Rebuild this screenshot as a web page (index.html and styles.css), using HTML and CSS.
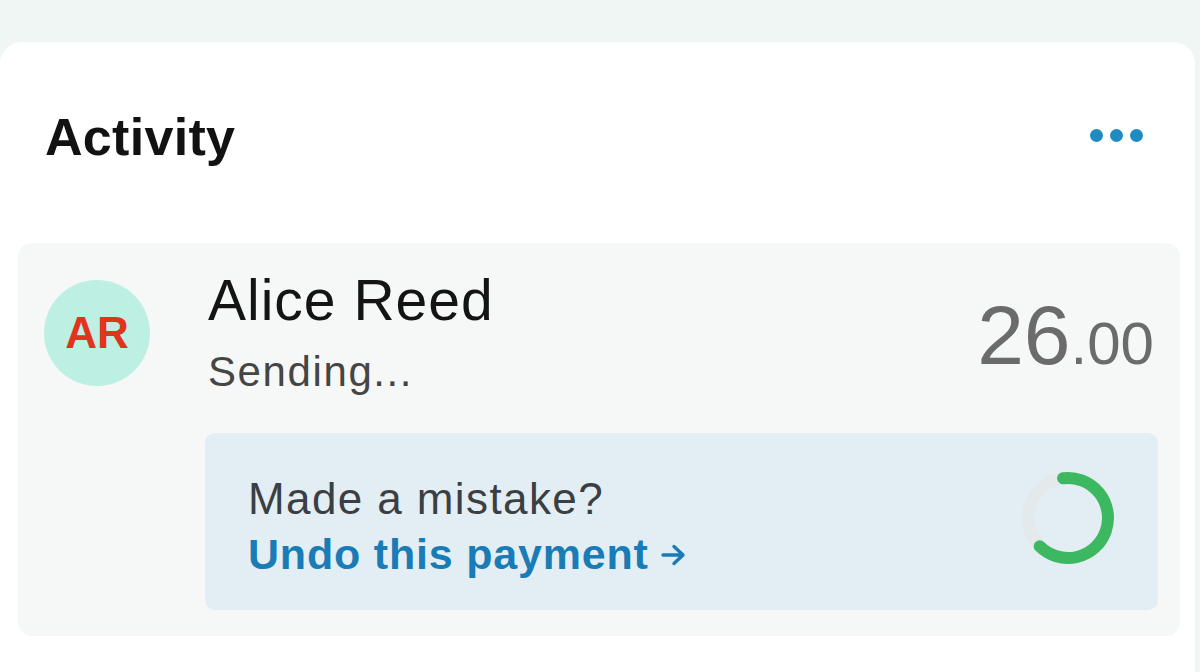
FILE: index.html
```html
<!DOCTYPE html>
<html lang="en">
<head>
  <meta charset="UTF-8" />
  <meta name="viewport" content="width=device-width, initial-scale=1.0"/>
  <title>Activity</title>
  <link rel="stylesheet" href="styles.css">
</head>
<body>
  <div class="card">
    <!-- header -->
    <div class="card-head">
      <h1>Activity</h1>
      <button class="more" aria-label="More">
        <span></span><span></span><span></span>
      </button>
    </div>

    <!-- pending payment -->
    <div class="item">
      <div class="item-row">
        <div class="avatar">AR</div>
        <div class="who">
          <div class="name">Alice Reed</div>
          <div class="status">Sending...</div>
        </div>
        <div class="amount">26<span class="cents">.00</span></div>
      </div>

      <div class="undo">
        <div class="undo-text">
          <div class="undo-q">Made a mistake?</div>
          <a class="undo-link" href="#">Undo this payment
            <svg class="arrow" width="26" height="24" viewBox="0 0 26 24">
              <path d="M2 12 H22 M13 3.5 L22 12 L13 20.5" fill="none" stroke="#1a7cb6" stroke-width="3.4" stroke-linecap="round" stroke-linejoin="round"/>
            </svg>
          </a>
        </div>
        <svg class="spinner" width="100" height="100" viewBox="0 0 100 100">
          <circle cx="50" cy="50" r="40" fill="none" stroke="#e4e9ec" stroke-width="12"/>
          <path d="M45.1 10.3 A40 40 0 1 1 21.7 78.3" fill="none" stroke="#3cb860" stroke-width="12" stroke-linecap="round"/>
        </svg>
      </div>
    </div>
  </div>
</body>
</html>
```

FILE: styles.css
```css
body {
  font-family: 'Liberation Sans', Arial, sans-serif;
  margin: 0;
  background-color: #eff6f3;
  color: #111;
  height: 672px;
  overflow: hidden;
}
.card {
  margin-top: 42px;
  margin-right: 5px;
  background-color: #fff;
  border-radius: 22px 22px 0 0;
  height: 630px;
  padding: 0 15px 0 18px;
}
.card-head {
  display: flex;
  justify-content: space-between;
  align-items: center;
  padding: 65px 37px 0 27px;
  margin-bottom: 76px;
}
h1 {
  margin: 0;
  font-size: 52px;
  line-height: 60px;
  font-weight: 700;
  letter-spacing: 0.3px;
  color: #121212;
}
.more {
  display: flex;
  gap: 7px;
  padding: 0;
  border: none;
  background: none;
  margin-top: -4px;
}
.more span {
  width: 13px;
  height: 13px;
  border-radius: 50%;
  background-color: #1e8bc3;
}
.item {
  background-color: #f6f7f7;
  border-radius: 14px;
  padding: 25px 22px 26px 26px;
}
.item-row {
  display: flex;
  align-items: flex-start;
}
.avatar {
  width: 106px;
  height: 106px;
  margin-top: 12px;
  border-radius: 50%;
  background-color: #bdf0e3;
  color: #e2341d;
  font-weight: 700;
  font-size: 44px;
  display: flex;
  align-items: center;
  justify-content: center;
}
.who {
  margin-left: 58px;
  flex: 1;
}
.name {
  font-size: 57px;
  line-height: 64px;
  letter-spacing: 1px;
  color: #141414;
}
.status {
  margin-top: 15px;
  font-size: 42px;
  line-height: 50px;
  letter-spacing: 1.6px;
  color: #454545;
}
.amount {
  margin-top: 24px;
  margin-right: 4px;
  font-size: 84px;
  line-height: 86px;
  color: #6b6b6b;
}
.cents {
  font-size: 60px;
}
.undo {
  margin: 36px 0 0 161px;
  height: 177px;
  box-sizing: border-box;
  background-color: #e3eef4;
  border-radius: 10px;
  display: flex;
  align-items: center;
  justify-content: space-between;
  padding: 8px 40px 0 43px;
}
.undo-q {
  font-size: 44px;
  line-height: 52px;
  letter-spacing: 1.4px;
  color: #3b3f43;
}
.undo-link {
  display: flex;
  align-items: center;
  gap: 12px;
  margin-top: 4px;
  font-size: 43px;
  line-height: 50px;
  font-weight: 700;
  letter-spacing: 0.8px;
  color: #1a7cb6;
  text-decoration: none;
}
.arrow {
  display: block;
  flex-shrink: 0;
  margin-top: 2px;
}
.spinner {
  display: block;
  flex-shrink: 0;
  margin-bottom: 16px;
}
```
